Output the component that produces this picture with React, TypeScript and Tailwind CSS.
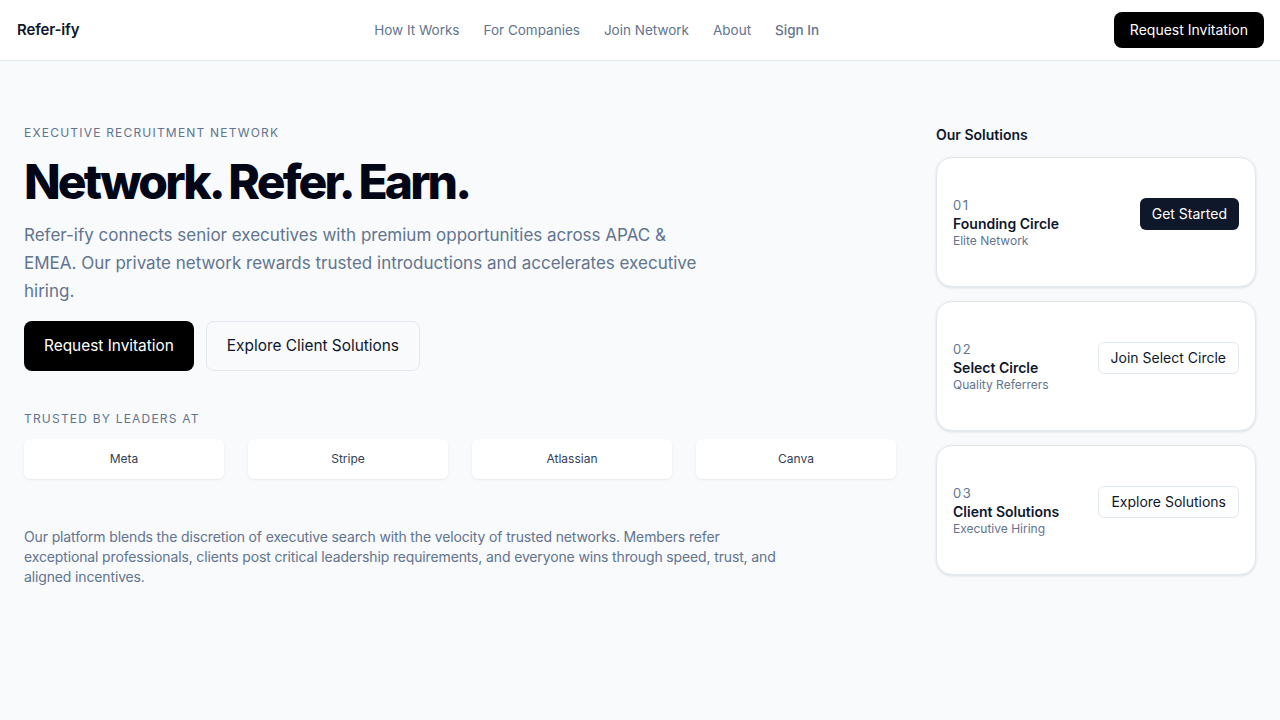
import React from "react";

const NAV = ["How It Works", "For Companies", "Join Network", "About"];
const LOGOS = ["Meta", "Stripe", "Atlassian", "Canva"];

const SOLUTIONS = [
  { num: "01", title: "Founding Circle", sub: "Elite Network", cta: "Get Started", primary: true },
  { num: "02", title: "Select Circle", sub: "Quality Referrers", cta: "Join Select Circle", primary: false },
  { num: "03", title: "Client Solutions", sub: "Executive Hiring", cta: "Explore Solutions", primary: false },
];

function SolutionCard({ s }: { s: (typeof SOLUTIONS)[number] }) {
  return (
    <div className="bg-white rounded-2xl border border-slate-200 shadow-[0_1px_3px_rgba(15,23,42,0.12)] px-4 pt-[39px] pb-[37px] flex items-start justify-between">
      <div className="flex flex-col">
        <span className="text-[13px] leading-4 tracking-[0.12em] text-slate-500">{s.num}</span>
        <span className="text-sm leading-[18px] font-semibold text-slate-900 mt-[2px]">{s.title}</span>
        <span className="text-xs leading-4 text-slate-500">{s.sub}</span>
      </div>
      <button
        className={
          s.primary
            ? "mt-[1px] h-8 px-3 rounded-md bg-[#0f172a] text-white text-sm"
            : "mt-[1px] h-8 px-3 rounded-md bg-white border border-slate-200 text-slate-900 text-sm"
        }
      >
        {s.cta}
      </button>
    </div>
  );
}

export default function App() {
  return (
    <div className="min-h-screen bg-slate-50 text-slate-900 font-['Inter',sans-serif]">
      <header className="h-[61px] bg-white border-b border-slate-200 flex items-center justify-between pl-[17px] pr-4">
        <span className="text-[15px] font-semibold tracking-[-0.01em] text-slate-900">Refer-ify</span>
        <nav className="flex items-center gap-6 text-[13.5px] text-slate-500">
          {NAV.map((n) => (
            <a key={n}>{n}</a>
          ))}
          <a className="font-medium">Sign In</a>
        </nav>
        <button className="h-9 px-4 rounded-lg bg-black text-white text-sm">Request Invitation</button>
      </header>

      <main className="px-6 pt-[64px] flex gap-10">
        <section className="flex-1 flex flex-col">
          <p className="text-xs tracking-[0.1em] text-slate-500 uppercase">Executive Recruitment Network</p>
          <h1 className="mt-[13px] text-[48px] leading-[56px] font-extrabold tracking-[-0.06em] text-[#020617]">
            Network. Refer. Earn.
          </h1>
          <p className="mt-[11px] max-w-[690px] text-[17px] leading-7 text-slate-500">
            Refer-ify connects senior executives with premium opportunities across APAC &amp; EMEA. Our private
            network rewards trusted introductions and accelerates executive hiring.
          </p>
          <div className="mt-[16px] flex gap-3">
            <button className="h-[50px] px-5 rounded-lg bg-black text-white text-[15.4px]">Request Invitation</button>
            <button className="h-[50px] px-5 rounded-lg bg-slate-50 border border-slate-200 text-slate-900 text-[15.4px]">
              Explore Client Solutions
            </button>
          </div>
          <p className="mt-10 text-xs tracking-[0.1em] text-slate-500 uppercase">Trusted by leaders at</p>
          <div className="mt-3 grid grid-cols-4 gap-6">
            {LOGOS.map((l) => (
              <div
                key={l}
                className="h-10 bg-white rounded-md shadow-[0_1px_2px_rgba(15,23,42,0.08)] flex items-center justify-center text-xs text-slate-700"
              >
                {l}
              </div>
            ))}
          </div>
          <p className="mt-12 max-w-[768px] text-sm leading-5 text-slate-500 tracking-[-0.01em]">
            Our platform blends the discretion of executive search with the velocity of trusted networks. Members
            refer exceptional professionals, clients post critical leadership requirements, and everyone wins through
            speed, trust, and aligned incentives.
          </p>
        </section>

        <aside className="w-[320px] flex flex-col">
          <h2 className="text-sm font-semibold text-slate-900">Our Solutions</h2>
          <div className="mt-3 flex flex-col gap-[14px]">
            {SOLUTIONS.map((s) => (
              <SolutionCard key={s.num} s={s} />
            ))}
          </div>
        </aside>
      </main>
    </div>
  );
}
